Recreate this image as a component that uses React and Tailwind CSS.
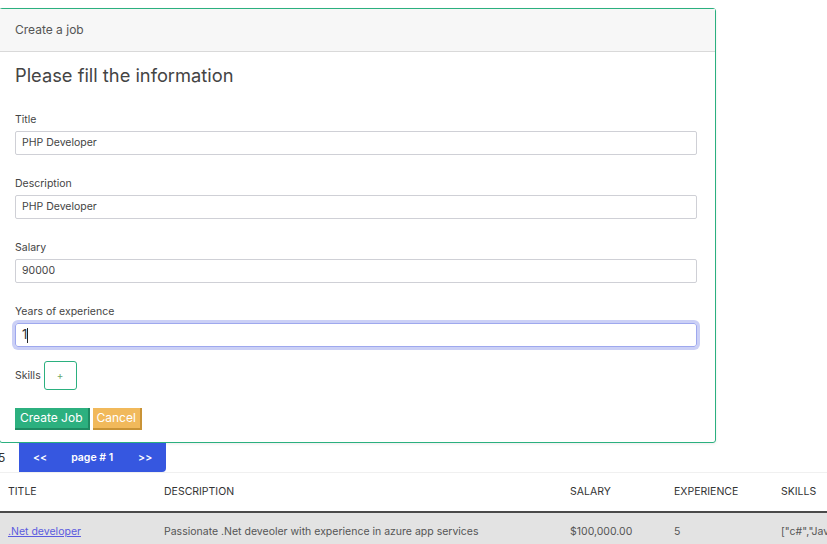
import React from "react";

const fields = [
  { label: "Title", value: "PHP Developer" },
  { label: "Description", value: "PHP Developer" },
  { label: "Salary", value: "90000" },
];

export default function App() {
  return (
    <div className="w-[827px] h-[544px] overflow-hidden bg-white text-[#333] font-['Inter',sans-serif]">
      {/* Card */}
      <div className="mt-2 ml-[-1px] w-[717px] border border-[#2bb07f] rounded-[3px] shadow-[0_1px_3px_rgba(0,0,0,0.08)]">
        <div className="h-[43px] flex items-center pl-[15px] bg-[#f7f7f7] border-b border-[#d9d9d9] text-[12px] text-[#555]">
          Create a job
        </div>
        <div className="pl-[15px] pt-[12px] pb-[12px]">
          <h2 className="text-[18.3px] leading-[22px] text-[#444]">Please fill the information</h2>
          <div className="h-[27px]" />
          {fields.map((f) => (
            <div key={f.label} className="mb-[22px]">
              <label className="block text-[10.5px] leading-[14px] text-[#444]">{f.label}</label>
              <div className="mt-1 w-[682px] h-6 border border-[#cfd0d6] rounded-[2px] flex items-center pl-[6px] text-[10.5px] text-[#444]">
                {f.value}
              </div>
            </div>
          ))}
          <div>
            <label className="block text-[10.5px] leading-[14px] text-[#444]">Years of experience</label>
            <div className="mt-1 w-[682px] h-6 border border-[#9ea8ee] rounded-[3px] ring-[3px] ring-[#cbd0f6] flex items-center pl-[6px] text-[13px] text-[#333]">
              1<span className="inline-block w-px h-[15px] bg-[#222]" />
            </div>
          </div>
          <div className="mt-[14px] flex items-center gap-[3px]">
            <span className="text-[10.5px] text-[#444]">Skills</span>
            <button className="w-[33px] h-[29px] border border-[#2bb07f] rounded-[3px] text-[10px] text-[#6aa86a]">+</button>
          </div>
          <div className="mt-[18px] flex gap-[3px]">
            <button className="h-[22px] px-[5px] bg-[#2cb07f] border-r-2 border-b-2 border-[#1f8a62] text-white text-[12px] leading-none">Create Job</button>
            <button className="h-[22px] px-[4px] bg-[#f1b95b] border-r-2 border-b-2 border-[#c99336] text-white text-[12px] leading-none">Cancel</button>
          </div>
        </div>
      </div>

      {/* Pagination */}
      <div className="flex h-[29px]">
        <div className="w-[19px] flex items-center text-[12px] text-[#333] bg-white -ml-[2px]">5</div>
        <div className="w-[147px] ml-[2px] bg-[#3657e0] rounded-br-[4px] flex items-center text-white text-[10.5px] font-semibold">
          <span className="ml-[14px]">&lt;&lt;</span>
          <span className="ml-[24px]">page # 1</span>
          <span className="ml-[25px]">&gt;&gt;</span>
        </div>
      </div>

      {/* Table */}
      <div className="border-t border-[#f0f0f0] overflow-hidden">
        <table className="table-fixed w-[1000px] text-[10.5px] border-collapse">
          <colgroup>
            <col className="w-[156px]" />
            <col className="w-[406px]" />
            <col className="w-[104px]" />
            <col className="w-[107px]" />
            <col className="w-[227px]" />
          </colgroup>
          <thead>
            <tr className="h-[39px] border-b-2 border-[#4a4a4a] text-left text-[#333]">
              <th className="pl-2 font-normal">TITLE</th>
              <th className="pl-2 font-normal">DESCRIPTION</th>
              <th className="pl-2 font-normal">SALARY</th>
              <th className="pl-2 font-normal">EXPERIENCE</th>
              <th className="pl-2 font-normal">SKILLS</th>
            </tr>
          </thead>
          <tbody>
            <tr className="h-[38px] bg-[#e3e3e3] text-[#555]">
              <td className="pl-2 align-middle">
                <a href="#" className="text-[#5b5bdf] underline">.Net developer</a>
              </td>
              <td className="pl-2">Passionate .Net deveoler with experience in azure app services</td>
              <td className="pl-2">$100,000.00</td>
              <td className="pl-2">5</td>
              <td className="pl-2 whitespace-nowrap">["c#","Java"]</td>
            </tr>
          </tbody>
        </table>
      </div>
    </div>
  );
}
